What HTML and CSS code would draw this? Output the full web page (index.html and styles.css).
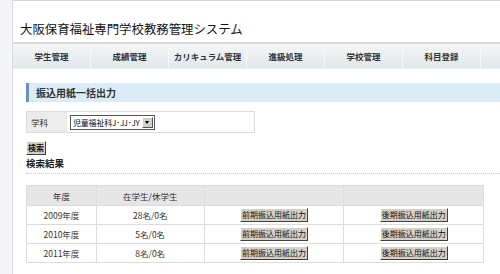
FILE: index.html
```html
<!DOCTYPE html>
<html lang="ja">
<head>
    <meta charset="UTF-8">
    <title>大阪保育福祉専門学校教務管理システム</title>
    <link rel="stylesheet" href="styles.css">
</head>
<body>
<div class="page">
    <h1 class="site-title">大阪保育福祉専門学校教務管理システム</h1>
    <ul class="nav">
        <li>学生管理</li>
        <li>成績管理</li>
        <li>カリキュラム管理</li>
        <li>進級処理</li>
        <li>学校管理</li>
        <li>科目登録</li>
        <li></li>
    </ul>

    <div class="content">
        <h2 class="section-title">振込用紙一括出力</h2>

        <table class="search-form">
            <tr>
                <th>学科</th>
                <td>
                    <span class="select">
                        <span class="select-text">児童福祉科J･JJ･JY</span>
                        <span class="select-arrow"></span>
                    </span>
                </td>
            </tr>
        </table>

        <button type="button" class="btn btn-search">検索</button>

        <h3 class="result-title">検索結果</h3>

        <table class="result">
            <tr>
                <th class="col-year">年度</th>
                <th class="col-count">在学生/休学生</th>
                <th class="col-btn"></th>
                <th class="col-btn"></th>
            </tr>
            <tr>
                <td>2009年度</td>
                <td>28名/0名</td>
                <td><button type="button" class="btn">前期振込用紙出力</button></td>
                <td><button type="button" class="btn">後期振込用紙出力</button></td>
            </tr>
            <tr>
                <td>2010年度</td>
                <td>5名/0名</td>
                <td><button type="button" class="btn">前期振込用紙出力</button></td>
                <td><button type="button" class="btn">後期振込用紙出力</button></td>
            </tr>
            <tr>
                <td>2011年度</td>
                <td>8名/0名</td>
                <td><button type="button" class="btn">前期振込用紙出力</button></td>
                <td><button type="button" class="btn">後期振込用紙出力</button></td>
            </tr>
        </table>
    </div>
</div>
</body>
</html>
```

FILE: styles.css
```css
body {
    margin: 0;
    background: #f3f5f9;
    font-family: "Noto Sans CJK JP", "DejaVu Sans", sans-serif;
    color: #222;
    overflow: hidden;
}
.page {
    margin-left: 12px;
    min-height: 274px;
    background: #fff;
    border-left: 1px solid #dadada;
    border-top: 1px solid #d4d4d4;
}
.site-title {
    margin: 0;
    padding: 20px 0 0 7px;
    height: 21px;
    font-size: 12.4px;
    line-height: 16px;
    font-weight: normal;
    color: #111;
}
.nav {
    display: flex;
    overflow: hidden;
    list-style: none;
    margin: 0;
    padding: 0;
    height: 24px;
    border-top: 2px solid #d8d8d6;
    border-bottom: 1px solid #eef0f2;
    background: linear-gradient(#f4f6f7, #e3e7ea);
}
.nav li {
    flex: 0 0 77px;
    border-right: 1px solid #f8f9fa;
    text-align: center;
    font-size: 8.5px;
    font-weight: bold;
    line-height: 24px;
    color: #333;
}
.content {
    padding: 0 0 0 13px;
}
.section-title {
    margin: 14px 0 0;
    height: 19px;
    padding-left: 7px;
    border-left: 3px solid #6a8fc2;
    background: #dcecf6;
    font-size: 10px;
    line-height: 19px;
    font-weight: bold;
    color: #333;
}
.search-form {
    margin-top: 9px;
    width: 229px;
    border-collapse: collapse;
    border: 1px solid #dcdcdc;
    font-size: 8.5px;
    line-height: 13px;
}
.search-form th {
    width: 36px;
    height: 20px;
    padding: 0 0 0 4px;
    background: #ececec;
    text-align: left;
    font-weight: normal;
    color: #333;
}
.search-form td {
    height: 20px;
    padding: 0 0 0 3px;
}
.select {
    display: inline-flex;
    align-items: center;
    height: 13px;
    border: 1px solid #555;
    background: #fff;
    vertical-align: middle;
}
.select-text {
    padding: 0 2px;
    font-size: 8px;
    letter-spacing: -0.2px;
    line-height: 13px;
    color: #111;
}
.select-arrow {
    width: 9px;
    height: 9px;
    margin-right: 1px;
    background: #d4d0c8;
    border: 1px solid;
    border-color: #fff #555 #555 #fff;
    position: relative;
}
.select-arrow::after {
    content: "";
    position: absolute;
    left: 2px;
    top: 3px;
    border-left: 2.5px solid transparent;
    border-right: 2.5px solid transparent;
    border-top: 3px solid #000;
}
.btn {
    margin: 0;
    padding: 0 1px;
    height: 14px;
    font-family: inherit;
    font-size: 8px;
    line-height: 12px;
    color: #111;
    background: #d4d0c8;
    border: 1px solid;
    border-color: #fff #404040 #404040 #fff;
    border-radius: 0;
}
.btn-search {
    display: block;
    margin-top: 8px;
    font-weight: bold;
}
.result-title {
    margin: 1px 0 0;
    padding-bottom: 3px;
    border-bottom: 1px dotted #b8cbe8;
    font-size: 9.5px;
    line-height: 14px;
    font-weight: bold;
    color: #222;
}
.result {
    margin-top: 11px;
    width: 458px;
    border-collapse: collapse;
    font-size: 8.5px;
    color: #333;
}
.result th,
.result td {
    border: 1px solid #dcdcdc;
    text-align: center;
    padding: 0;
}
.result th {
    height: 19px;
    background: #e6e6e6;
    font-weight: normal;
}
.result td {
    height: 18px;
}
.col-year {
    width: 69px;
}
.col-count {
    width: 107px;
}
.col-btn {
    width: 139px;
}
```
